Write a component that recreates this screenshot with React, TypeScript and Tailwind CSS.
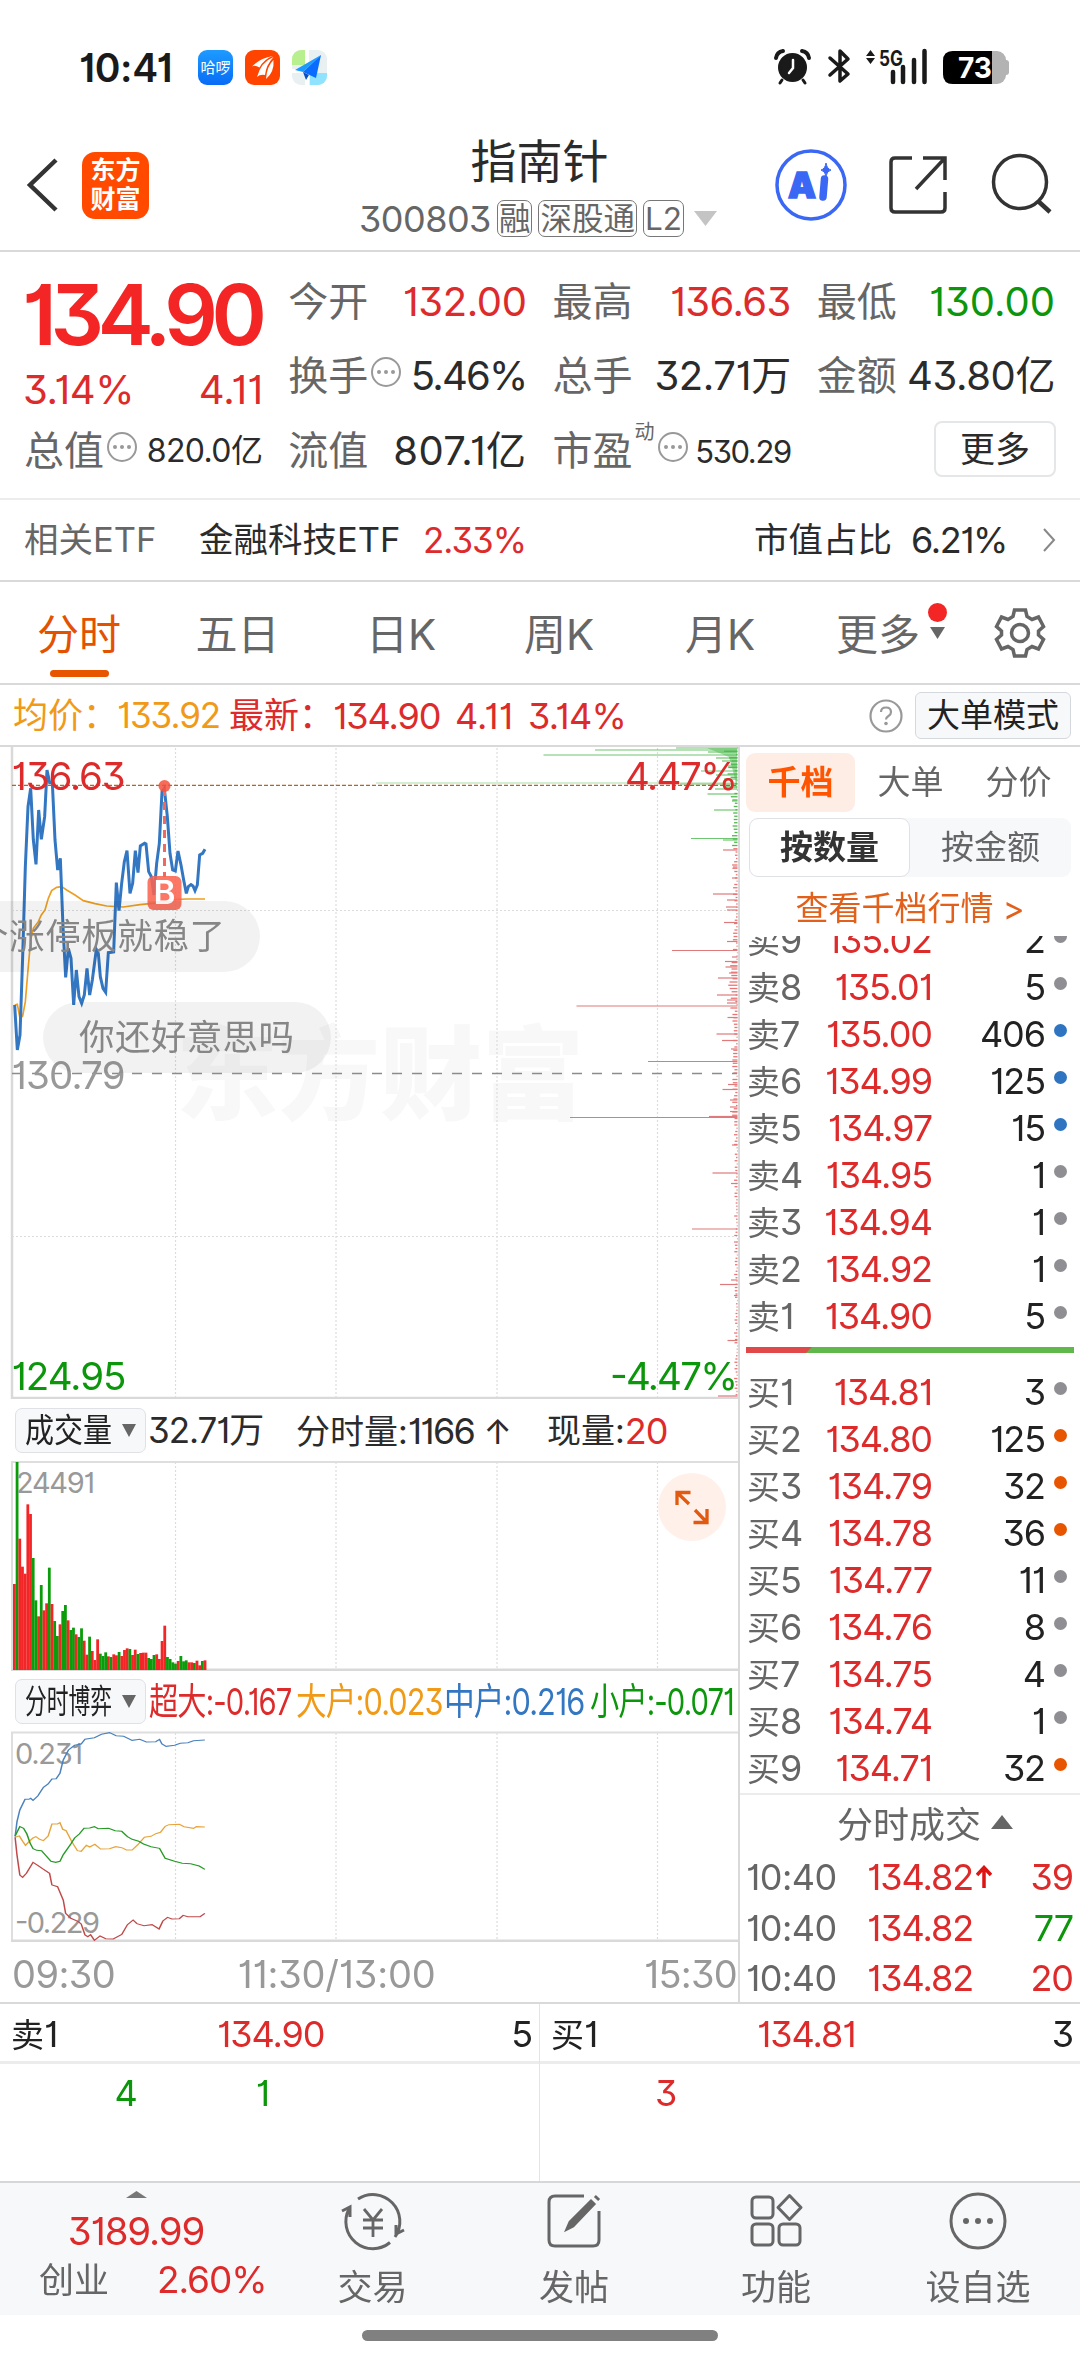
import { ReactNode } from "react";
import clsx from "clsx";
import { twMerge } from "tailwind-merge";

const RED = "text-[#dd2b2b]";
const GREEN = "text-[#0b960b]";
const GRAY = "text-[#666666]";
const DARK = "text-[#2b2b2b]";

const Num = ({ className, children }: { className?: string; children: ReactNode }) => (
  <span className={twMerge("whitespace-nowrap tracking-[-0.03em] [font-feature-settings:'cv09','cv01']", className)}>
    {children}
  </span>
);

const StatusBar = () => (
  <div className="flex h-[110px] items-center pt-[24px] pl-[79px]">
    <div className="w-[119px] text-[39px] font-semibold text-[#1a1a1a]">
      <Num className="tracking-[-0.01em]">10:41</Num>
    </div>
    <div className="flex gap-3">
      <div className="flex h-[35px] w-[35px] items-center justify-center rounded-[9px] bg-gradient-to-b from-[#1f9bff] to-[#0a6cf5] text-[15px] text-white">
        哈啰
      </div>
      <svg className="h-[35px] w-[35px]" viewBox="0 0 35 35">
        <rect width="35" height="35" rx="9" fill="#ff4400" />
        <g fill="#fff">
          <path d="M7 16.500Q15 8 28 6Q19 9 14.500 17.500Q10 14.500 7 16.500Z" />
          <path d="M12 27Q16 12 28.500 7Q21 15 20 25Q15 24 12 27Z" />
          <path d="M21 29Q22 16 28.500 10Q29.500 22 21 29Z" />
        </g>
      </svg>
      <svg className="h-[35px] w-[35px]" viewBox="0 0 35 35">
        <clipPath id="mapClip">
          <rect width="35" height="35" rx="9" />
        </clipPath>
        <g clipPath="url(#mapClip)">
          <rect width="35" height="35" fill="#e9f0f2" />
          <path d="M0 0H13V15H0Z" fill="#b9f08f" />
          <path d="M18 23H35V35H18Z" fill="#8fe3ff" />
          <path d="M15 0V35M0 21H15" stroke="#fff" strokeWidth="4" />
          <path d="M29 5L3 20L11 22Z" fill="#1b9bff" />
          <path d="M29 5L11 22L24 28Z" fill="#0a6cff" />
          <path d="M11 22L14 30L17 25Z" fill="#0a4fc0" />
        </g>
      </svg>
    </div>
    <svg className="ml-[446px] h-[40px] w-[240px]" viewBox="0 0 240 40">
      <g fill="none" stroke="#1a1a1a" strokeLinecap="round">
        <path d="M3 11Q4 5 10 4M29 4Q35 5 36 11" strokeWidth="4" />
        <circle cx="19.500" cy="20.500" r="13" fill="#1a1a1a" strokeWidth="3" />
        <path d="M9 33L7 36M30 33L32 36" strokeWidth="3" />
        <path d="M20 13V21L16 26" stroke="#fff" strokeWidth="2.500" />
        <path d="M57 11L75 27L67 34V4L75 12L57 28" strokeWidth="3.500" strokeLinejoin="round" />
        <path d="M120 25V35M130 20V35M141 13V35M151.500 4V35" strokeWidth="4.500" />
      </g>
      <path d="M93 9L97.500 3L102 9ZM93 11L97.500 17L102 11Z" fill="#1a1a1a" />
      <text x="106" y="19" fontSize="21" fontWeight="700" textLength="24" lengthAdjust="spacingAndGlyphs" fill="#1a1a1a">
        5G
      </text>
      <rect x="170" y="4" width="63" height="33" rx="9" fill="#b3b3b3" />
      <rect x="230" y="13" width="6" height="15" rx="3" fill="#b3b3b3" />
      <path d="M180 4H219V37H180Q170 37 170 27V14Q170 4 180 4Z" fill="#000" />
      <text x="185" y="31" fontSize="29" fontWeight="700" textLength="34" lengthAdjust="spacingAndGlyphs" fill="#fff">
        73
      </text>
    </svg>
  </div>
);

const Tag = ({ children }: { children: ReactNode }) => (
  <span className="flex h-[37px] items-center rounded-[7px] border border-[#777] px-[1px] text-[31.5px]">
    {children}
  </span>
);

const Header = () => (
  <div className="flex h-[142px] items-start border-b-2 border-[#d9d9d9]">
    <svg className="mt-[48px] ml-[26px] h-[54px] w-[34px]" viewBox="0 0 34 54">
      <path d="M30 2L4 27L30 52" fill="none" stroke="#333" strokeWidth="4.500" />
    </svg>
    <div className="mt-[42px] ml-[22px] flex h-[67px] w-[67px] flex-col items-center justify-center rounded-[13px] bg-[#ff4a00] pb-[2px] text-[25px] leading-[29px] font-bold text-white">
      <span>东方</span>
      <span>财富</span>
    </div>
    <div className="ml-[151px] flex w-[474px] flex-col items-center pt-[26px]">
      <span className="ml-[5px] text-[46px] leading-[50px] text-[#2b2b2b]">指南针</span>
      <div className={clsx("mt-[14px] ml-[2px] flex h-[37px] items-center gap-[6px] text-[36px]", GRAY)}>
        <Num className="tracking-[-0.015em]">300803</Num>
        <Tag>融</Tag>
        <Tag>深股通</Tag>
        <Tag>L2</Tag>
        <svg className="ml-[4px] h-[15px] w-[23px]" viewBox="0 0 23 15">
          <path d="M0 0H23L11.500 15Z" fill="#c4c4c4" />
        </svg>
      </div>
    </div>
    <svg className="mt-[38px] h-[74px] w-[74px]" viewBox="0 0 74 74">
      <circle cx="37" cy="37" r="34" fill="none" stroke="#3a68f5" strokeWidth="3.500" />
      <text x="14" y="50" fontSize="36" fontWeight="900" textLength="28" lengthAdjust="spacingAndGlyphs" fill="#3a68f5" stroke="#3a68f5" strokeWidth="1.500">
        A
      </text>
      <path d="M50.500 31L49 49" stroke="#3a68f5" strokeWidth="7.500" strokeLinecap="round" />
      <path d="M52 15Q53 21 57 22Q53 23 52 28Q51 23 47 22Q51 21 52 15Z" fill="#3a68f5" stroke="#3a68f5" />
    </svg>
    <svg className="mt-[44px] ml-[40px] h-[62px] w-[62px]" viewBox="0 0 62 62" fill="none" stroke="#333" strokeWidth="3.500">
      <path d="M24 4H7Q3 4 3 8V54Q3 58 7 58H53Q57 58 57 54V38" />
      <path d="M35 4H57V26M57 4L28 35" />
    </svg>
    <svg className="mt-[43px] ml-[41px] h-[62px] w-[62px]" viewBox="0 0 62 62" fill="none" stroke="#333" strokeWidth="3.500">
      <circle cx="29" cy="29" r="26.500" />
      <path d="M47 48L59 59" strokeWidth="4.500" />
    </svg>
  </div>
);

const InfoDots = () => (
  <svg className="h-[32px] w-[32px] shrink-0" viewBox="0 0 32 32">
    <circle cx="16" cy="16" r="14" fill="none" stroke="#999" strokeWidth="2" />
    <g fill="#999">
      <circle cx="9" cy="16" r="2" />
      <circle cx="16" cy="16" r="2" />
      <circle cx="23" cy="16" r="2" />
    </g>
  </svg>
);

interface StatProps {
  label: string;
  value: string;
  color?: string;
  dots?: boolean;
  sup?: string;
  valueClass?: string;
}

const Stat = ({ label, value, color = DARK, dots, sup, valueClass }: StatProps) => (
  <div className="flex h-[74px] items-center">
    <span className={clsx("ml-[-1px] text-[40px]", GRAY)}>{label}</span>
    {sup && <span className={clsx("mt-[-38px] ml-[2px] text-[20px]", GRAY)}>{sup}</span>}
    {dots && (
      <span className="mt-[-8px] ml-[2px]">
        <InfoDots />
      </span>
    )}
    <Num className={twMerge("ml-auto text-[40px] tracking-[-0.01em]", color, valueClass)}>{value}</Num>
  </div>
);

const Quote = () => (
  <div className="grid h-[248px] grid-cols-4 grid-rows-[74px_75px_74px] gap-x-[27px] border-b-2 border-[#ececec] px-[25px] pt-[13px]">
    <div className="row-span-2">
      <div className="flex h-[100px] items-center">
        <Num className="ml-[-3px] text-[84px] font-semibold tracking-[-0.075em] text-[#f32525]">134.90</Num>
      </div>
      <div className={clsx("flex h-[49px] items-center justify-between text-[40px]", RED)}>
        <Num className="ml-[-2px] tracking-[-0.01em]">3.14%</Num>
        <Num className="mr-[-1px] tracking-[0em]">4.11</Num>
      </div>
    </div>
    <Stat label="今开" value="132.00" color={RED} />
    <Stat label="最高" value="136.63" color={RED} valueClass="tracking-[-0.015em]" />
    <Stat label="最低" value="130.00" color={GREEN} valueClass="tracking-[0em]" />
    <Stat label="换手" value="5.46%" dots valueClass="tracking-[-0.045em]" />
    <Stat label="总手" value="32.71万" />
    <Stat label="金额" value="43.80亿" />
    <Stat label="总值" value="820.0亿" dots valueClass="text-[32px] tracking-[-0.02em]" />
    <Stat label="流值" value="807.1亿" valueClass="tracking-[0.01em]" />
    <Stat label="市盈" value="530.29" sup="动" dots valueClass="text-[31px] tracking-[-0.045em]" />
    <div className="flex items-center justify-end">
      <span className="mt-[-4px] mr-[-1px] flex h-[56px] w-[122px] items-center justify-center rounded-lg border-2 border-[#e4e6e8] text-[35px] text-[#2b2b2b]">
        更多
      </span>
    </div>
  </div>
);

const EtfRow = () => (
  <div className="flex h-[82px] items-center border-b-2 border-[#d9d9d9] px-[24px] text-[34.5px] text-[#2b2b2b]">
    <span className={clsx("w-[175px]", GRAY)}>相关ETF</span>
    <span className="w-[224px]">金融科技ETF</span>
    <Num className={twMerge("text-[35px]", RED)}>2.33%</Num>
    <span className="ml-auto">市值占比</span>
    <Num className="ml-[19px] text-[36px] tracking-[-0.04em]">6.21%</Num>
    <svg className="ml-[35px] h-[24px] w-[14px]" viewBox="0 0 14 24">
      <path d="M2 1L12 12L2 23" fill="none" stroke="#888" strokeWidth="2" />
    </svg>
  </div>
);

const Tabs = () => (
  <div className={clsx("flex h-[103px] items-center border-b-2 border-[#d9d9d9] text-[42px]", GRAY)}>
    <div className="flex h-full w-[158px] flex-col items-center justify-between pt-[26px] pb-[6px] text-[#e25200]">
      <span className="leading-[54px]">分时</span>
      <span className="h-[7px] w-[59px] rounded-full bg-[#e85500]" />
    </div>
    <span className="w-[159px] pt-[4px] text-center">五日</span>
    <span className="w-[168px] pt-[4px] text-center">日K</span>
    <span className="w-[148px] pt-[4px] text-center">周K</span>
    <span className="w-[174px] pt-[4px] text-center">月K</span>
    <span className="ml-[29px] pt-[4px]">更多</span>
    <div className="ml-[8px] flex flex-col items-center gap-[5px] pb-[23px]">
      <span className="h-[19px] w-[19px] rounded-full bg-[#f32525]" />
      <svg className="h-[12px] w-[15px]" viewBox="0 0 15 12">
        <path d="M0 0H15L7.500 12Z" fill="#666" />
      </svg>
    </div>
    <svg className="ml-[47px] h-[52px] w-[52px]" viewBox="-26 -26 52 52" fill="none" stroke="#666" strokeWidth="3.500">
      <path d="M-5.500 -23H5.500L7 -16.500L12 -13.500L18.500 -16L23.500 -6.500L18.500 -2V2L23.500 6.500L18.500 16L12 13.500L7 16.500L5.500 23H-5.500L-7 16.500L-12 13.500L-18.500 16L-23.500 6.500L-18.500 2V-2L-23.500 -6.500L-18.500 -16L-12 -13.500L-7 -16.500Z" />
      <circle r="8.500" />
    </svg>
  </div>
);

const PriceSummary = () => (
  <div className="flex h-[62px] items-center border-b-2 border-[#d9d9d9] pt-[1px] pr-[9px] pl-[13px] text-[35px]">
    <span className="flex w-[216px] items-center text-[#f09a18]">
      <span className="w-[104px] whitespace-nowrap">均价：</span>
      <Num>133.92</Num>
    </span>
    <span className={clsx("flex items-center", RED)}>
      <span className="w-[104px] whitespace-nowrap">最新：</span>
      <Num className="w-[122px] text-[36px]">134.90</Num>
      <Num className="w-[73px] text-[36px] tracking-[0em]">4.11</Num>
      <Num className="text-[36px] tracking-[-0.02em]">3.14%</Num>
    </span>
    <svg className="ml-auto h-[34px] w-[34px]" viewBox="0 0 34 34">
      <circle cx="17" cy="17" r="15.500" fill="none" stroke="#999" strokeWidth="2.200" />
      <path d="M12 13Q12 8.500 17 8.500T22 13Q22 15.500 19.500 17T17 20.500" fill="none" stroke="#999" strokeWidth="2.200" />
      <circle cx="17" cy="24.500" r="1.800" fill="#999" />
    </svg>
    <span className="ml-[12px] flex h-[47px] w-[156px] items-center justify-center rounded-md border border-[#d5d8dc] bg-[#f7f8fa] text-[33px] text-[#222]">
      大单模式
    </span>
  </div>
);

const GRID_X = [175.5, 336, 497, 657.5];

// [y, left edge] of the longer resting orders, right aligned on the axis
const SELL_DEPTH = [
  [748, 676], [750, 595], [752, 708], [755, 543.5], [758, 716], [761, 722], [766, 728], [771, 701], [775, 716],
  [779, 724], [784, 680], [789, 715], [794, 707.5], [801, 732], [810, 714], [838.5, 691], [840, 723],
];
const BUY_DEPTH = [
  [850, 723], [867, 733], [878, 732], [894, 713], [900, 727], [907, 726], [910, 727], [922.5, 724], [941.5, 727],
  [950.5, 672], [957, 732], [961.5, 725], [967, 725.5], [973, 729], [978, 718], [995, 717], [1000, 727], [1003, 727],
  [1006, 576.5], [1017.5, 727.5], [1034, 716.5], [1040.5, 722], [1049, 731], [1061.5, 648], [1084.5, 728],
  [1089.5, 722.5], [1100, 730], [1107, 730], [1111.5, 730], [1117.5, 570], [1116.5, 709], [1145, 732], [1173, 712.5],
  [1183.5, 731], [1229, 692], [1242, 734], [1280, 731], [1284.5, 720], [1295.5, 734], [1340.5, 727.5], [1396, 718],
];
const NOISE = Array.from({ length: 200 }, (_, i) => {
  const y = 748 + i * 3.25;
  const r = Math.abs(Math.sin(i * 12.9898) * 43758.5453) % 1;
  const spread = y < 800 ? 14 : y < 1010 && y > 960 ? 9 : y < 1130 ? 5 : 3;
  return [y, 737 - r * spread];
});

const PRICE =
  "44,795 52,930 60,885 68,650 76,380 84,200 92,145 100,300 108,373 116,210 124,298 134,230 141,90 149,128 157,128 165,300 173,390 181,355 189,560 197,712 205,625 213,655 221,795 229,690 237,770 245,790 253,765 261,685 269,765 277,720 289,628 295,640 301,710 309,745 317,757 325,638 341,636 349,428 357,512 365,430 373,365 381,332 390,460 398,430 406,332 414,398 421,318 434,310 438,312 446,395 454,410 462,465 470,370 478,310 486,155 493,145 502,230 510,340 518,390 526,393 534,333 543,375 551,420 559,460 565,440 573,434 579,438 585,452 592,435 599,345 608,340 615,328";
const AVERAGE =
  "44,795 52,793 60,835 68,828 76,785 84,690 92,600 100,565 115,545 124,525 135,510 145,475 155,452 170,442 185,440 200,450 225,465 250,482 285,491 320,498 370,501 420,494 450,491 480,488 520,479 560,477 615,477";

const digits = "[font-feature-settings:'cv09','cv01']";

const PriceChart = () => (
  <svg className="block h-[652px] w-[738px]" viewBox="0 747 738 652">
    <g fill="#f8f8f8" fontSize="102" fontWeight="900">
      <text x="176" y="1112" textLength="408">东方财富</text>
    </g>
    <g stroke="#dcdcdc" strokeWidth="1.200" strokeDasharray="2 2">
      {GRID_X.map((x) => (
        <path key={x} d={`M${x} 748V1398`} />
      ))}
      <path d="M12 910.500H737M12 1236.500H737" />
    </g>
    <path d="M12 746V1398H738" fill="none" stroke="#d9d9d9" strokeWidth="2.500" />
    <g stroke="#4db84d" strokeWidth="1.200" opacity="0.8">
      <path d="M376 783H737" opacity="0.6" />
      {SELL_DEPTH.map(([y, x]) => (
        <path key={y} d={`M${x} ${y}H737.500`} />
      ))}
    </g>
    <path d="M707 748L737 748V790L734 775L729 757Z" fill="#58bd58" opacity="0.55" />
    <g stroke="#e07a7a" strokeWidth="1.200">
      {BUY_DEPTH.map(([y, x]) => (
        <path key={y} d={`M${x} ${y}H737.500`} />
      ))}
    </g>
    {NOISE.map(([y, x]) => (
      <path key={y} d={`M${x} ${y}H737.500`} stroke={y < 847 ? "#4db84d" : "#ea7474"} strokeWidth="1.300" />
    ))}
    <path d="M12 785.300H737" stroke="#b5651d" strokeWidth="1.300" strokeDasharray="4 2" />
    <path d="M12 1073.500H737" stroke="#8c8c8c" strokeWidth="1.500" strokeDasharray="10 10" />
    <g transform="translate(0 740) scale(0.33333)" fill="none" strokeLinejoin="miter">
      <polyline points={AVERAGE} stroke="#ee9f22" strokeWidth="5" />
      <polyline points={PRICE} stroke="#3377c2" strokeWidth="9" />
    </g>
    <g className={digits} fontSize="38.500">
      <text x="11.500" y="789.500" textLength="114" fill="#dd2b2b">136.63</text>
      <text x="625" y="789.500" textLength="113" fill="#dd2b2b">4.47%</text>
      <text x="11.500" y="1088.500" textLength="114" fill="#999">130.79</text>
      <text x="11.500" y="1389.500" textLength="115" fill="#0b960b">124.95</text>
      <text x="610" y="1389.500" textLength="128" fill="#0b960b">-4.47%</text>
    </g>
    <path d="M164.500 788V877" stroke="#ee6a60" strokeWidth="3" strokeDasharray="8 6" />
    <circle cx="164.500" cy="786" r="6" fill="#f4513c" opacity="0.85" />
    <rect x="147.500" y="876" width="34" height="34" rx="6" fill="#fa6450" opacity="0.87" />
    <text x="153.500" y="904" fontSize="32" fontWeight="600" textLength="22" lengthAdjust="spacingAndGlyphs" fill="#fff">B</text>
    <g fill="#000" fillOpacity="0.05">
      <rect x="-60" y="901" width="320" height="71" rx="35.500" />
      <rect x="43" y="1002" width="288" height="71" rx="35.500" />
    </g>
    <g fontSize="35.500" fill="#868686">
      <text x="-27" y="949" textLength="252">个涨停板就稳了</text>
      <text x="79" y="1050" textLength="215">你还好意思吗</text>
    </g>
  </svg>
);

const Picker = ({ children }: { children: ReactNode }) => (
  <span className="flex h-[45px] w-[131px] shrink-0 items-center justify-between rounded-[7px] border border-[#dfe1e6] bg-[#f7f8fa] pr-[9px] pl-[9px] text-[33px] text-[#222]">
    <span className="w-[88px]">{children}</span>
    <svg className="h-[13px] w-[14px]" viewBox="0 0 14 13">
      <path d="M0 0H14L7 13Z" fill="#666" />
    </svg>
  </span>
);

const VolumeHeader = () => (
  <div className={clsx("flex h-[62px] items-center pt-[1px] pl-[15px] text-[34px]", DARK)}>
    <Picker>
      <span className="inline-block origin-left scale-x-[0.88] whitespace-nowrap">成交量</span>
    </Picker>
    <Num className="ml-[2px] w-[148px] text-[35px]">32.71万</Num>
    <span className="w-[251px] whitespace-nowrap">
      分时量:<Num className="text-[36px] tracking-[-0.05em]">1166</Num> ↑
    </span>
    <span>现量:</span>
    <Num className="text-[36px] text-[#dd2b2b]">20</Num>
  </div>
);

// bar tops in thirds of a pixel, "r" up and "g" down
const VOLUMES =
  "r432 g66 r296 r380 r401 r193 r222 g354 g481 r529 g435 r511 r490 g383 r492 g543 g588 r553 g513 g495 r541 g570 g563 r583 g591 g565 r602 r644 g590 r633 r660 r598 g641 g648 g637 r649 g651 r643 r646 g636 r648 r630 r625 g627 r645 r629 g642 r639 r638 r638 g654 g657 g645 r643 r657 r603 r557 g651 g657 g667 g671 r663 g648 g664 g661 r667 r667 g669 r662 r676 g663 r661".split(" ");

const VolumeChart = () => (
  <svg className="block h-[210px] w-[738px]" viewBox="0 1461 738 210">
    <g stroke="#dcdcdc" strokeWidth="1.200" strokeDasharray="2 2">
      {GRID_X.map((x) => (
        <path key={x} d={`M${x} 1462V1669`} />
      ))}
    </g>
    <path d="M738 1462H12V1670" fill="none" stroke="#dedede" strokeWidth="2" />
    <path d="M11 1669.700H738" stroke="#d9d9d9" strokeWidth="2.500" />
    {VOLUMES.map((v, i) => {
      const top = 1440 + Number(v.slice(1)) / 3;
      return (
        <rect key={i} x={13 + i * 2.685} y={top} width="2.800" height={1670 - top} fill={v[0] === "r" ? "#f22626" : "#0a9c0a"} />
      );
    })}
    <text x="16" y="1493" fontSize="29" textLength="79" fill="#999" className={digits}>24491</text>
    <circle cx="692" cy="1507" r="34" fill="#fff1ea" />
    <g fill="none" stroke="#e25a10" strokeWidth="3.300">
      <path d="M677 1505V1492.500H690.500M677 1492.500L689 1504" />
      <path d="M707 1509V1522.500H693.500M707 1522.500L695 1510" />
    </g>
  </svg>
);

const FLOWS = [
  { label: "超大:-0.167", color: "text-[#dd2b2b]", width: "w-[147px]" },
  { label: "大户:0.023", color: "text-[#f09a18]", width: "w-[148px]" },
  { label: "中户:0.216", color: "text-[#3377c2]", width: "w-[146px]" },
  { label: "小户:-0.071", color: "text-[#0b960b]", width: "w-[144px]" },
];

const FlowHeader = () => (
  <div className="flex h-[60px] items-center pl-[15px] text-[37px]">
    <Picker>
      <span className="inline-block origin-left scale-x-[0.66] whitespace-nowrap">分时博弈</span>
    </Picker>
    <div className="ml-[3px] flex">
      {FLOWS.map((f) => (
        <span key={f.label} className={clsx("shrink-0", f.width, f.color)}>
          <Num className={clsx("inline-block origin-left", f.label.includes("-") ? "scale-x-[0.79]" : "scale-x-[0.83]")}>{f.label}</Num>
        </span>
      ))}
    </div>
  </div>
);

const FlowChart = () => (
  <svg className="block h-[211px] w-[738px]" viewBox="0 1731 738 211">
    <g stroke="#dcdcdc" strokeWidth="1.200" strokeDasharray="2 2">
      {GRID_X.map((x) => (
        <path key={x} d={`M${x} 1733V1940`} />
      ))}
    </g>
    <path d="M738 1732.500H12V1941" fill="none" stroke="#dedede" strokeWidth="2" />
    <path d="M11 1940.700H738" stroke="#d9d9d9" strokeWidth="2.500" />
    <g fontSize="29" fill="#999" className={digits}>
      <text x="15" y="1764" textLength="68">0.231</text>
      <text x="15" y="1933" textLength="85">-0.229</text>
    </g>
    <g transform="translate(0 1700) scale(0.472 0.33333)" fill="none" strokeWidth="3.200">
      <polyline stroke="#4a82bd" points="32,410 36,365 42,330 53,298 61,298 65,295 70,301 80,288 92,262 102,252 110,237 119,236 127,220 134,180 145,150 158,136 172,132 180,118 200,113 215,103 232,98 246,107 262,109 280,121 296,118 310,126 330,125 338,118 343,132 352,139 370,136 382,130 398,128 410,122 434,120" />
      <polyline stroke="#e8a43a" points="32,412 41,408 48,424 54,436 62,424 70,414 76,410 84,418 92,422 102,408 110,372 122,372 127,368 133,388 140,392 152,425 164,452 172,454 183,436 190,441 201,433 213,447 232,446 245,440 258,443 268,450 280,450 292,434 306,412 320,409 330,401 340,397 350,379 358,374 380,373 390,380 410,385 416,380 434,381" />
      <polyline stroke="#259a25" points="32,408 42,380 50,385 57,402 64,430 70,446 78,451 88,452 98,468 108,484 118,487 127,484 134,464 150,432 158,414 168,402 178,385 190,384 200,380 208,386 230,385 244,392 258,394 270,410 280,418 294,424 304,432 320,440 338,445 350,475 370,484 386,490 404,491 422,498 434,508" />
      <polyline stroke="#c04848" points="32,412 36,465 42,525 48,532 56,520 70,487 80,496 90,506 105,520 110,555 122,560 128,580 134,600 139,640 150,655 165,664 172,672 180,705 186,710 192,704 200,721 212,708 224,716 240,717 258,703 270,674 282,660 290,671 305,677 322,674 337,687 345,663 355,652 364,657 380,656 388,646 398,650 424,650 434,640" />
    </g>
  </svg>
);

const LEVELS_SELL = [
  ["卖9", "135.02", "2", "bg-[#8e8e93]"],
  ["卖8", "135.01", "5", "bg-[#8e8e93]"],
  ["卖7", "135.00", "406", "bg-[#2f74c0]"],
  ["卖6", "134.99", "125", "bg-[#2f74c0]"],
  ["卖5", "134.97", "15", "bg-[#2f74c0]"],
  ["卖4", "134.95", "1", "bg-[#8e8e93]"],
  ["卖3", "134.94", "1", "bg-[#8e8e93]"],
  ["卖2", "134.92", "1", "bg-[#8e8e93]"],
  ["卖1", "134.90", "5", "bg-[#8e8e93]"],
];
const LEVELS_BUY = [
  ["买1", "134.81", "3", "bg-[#8e8e93]"],
  ["买2", "134.80", "125", "bg-[#e85500]"],
  ["买3", "134.79", "32", "bg-[#e85500]"],
  ["买4", "134.78", "36", "bg-[#e85500]"],
  ["买5", "134.77", "11", "bg-[#8e8e93]"],
  ["买6", "134.76", "8", "bg-[#8e8e93]"],
  ["买7", "134.75", "4", "bg-[#8e8e93]"],
  ["买8", "134.74", "1", "bg-[#8e8e93]"],
  ["买9", "134.71", "32", "bg-[#e85500]"],
];

const Level = ({ row: [name, price, qty, dot] }: { row: string[] }) => (
  <div className="flex h-[47px] shrink-0 items-center pr-[13px] pl-[7px] text-[36px]">
    <span className={clsx("w-[60px] text-[33px]", GRAY)}>
      {name[0]}
      <Num className="text-[36px]">{name[1]}</Num>
    </span>
    <Num className={clsx("w-[125px] text-right", RED)}>{price}</Num>
    <Num className="flex-1 text-right text-[#222]">{qty}</Num>
    <span className={clsx("mt-[-6px] ml-[9px] h-[13px] w-[13px] rounded-full", dot)} />
  </div>
);

const TRADES = [
  { price: "134.82", up: true, qty: "39", color: RED },
  { price: "134.82", qty: "77", color: GREEN },
  { price: "134.82", qty: "20", color: RED },
];

const OrderBook = () => (
  <div className="flex w-[342px] flex-col overflow-hidden border-l-2 border-[#d9d9d9] [&>*]:shrink-0">
    <div className={clsx("mt-[6px] ml-[6px] flex h-[59px] items-center text-[33px]", GRAY)}>
      <span className="flex h-full w-[109px] items-center justify-center rounded-[9px] bg-[#feede5] font-bold text-[#ff5500]">千档</span>
      <span className="w-[109px] pl-[2px] text-center">大单</span>
      <span className="w-[109px] text-center">分价</span>
    </div>
    <div className={clsx("mt-[6px] ml-[9px] flex h-[59px] w-[322px] items-center rounded-[9px] bg-[#f7f8fa] text-[33px]", GRAY)}>
      <span className="flex h-full w-[161px] items-center justify-center rounded-[9px] border border-[#dfe1e6] bg-white font-bold text-[#333]">按数量</span>
      <span className="w-[161px] text-center">按金额</span>
    </div>
    <div className="flex h-[59px] items-center justify-center pt-[3px] text-[33px] text-[#e2601a]">查看千档行情 &gt;</div>
    {/* scrolled list: the first ask is cut by the header */}
    <div className="flex h-[405px] flex-col justify-end overflow-hidden pb-[2px]">
      {LEVELS_SELL.map((row) => (
        <Level key={row[0]} row={row} />
      ))}
    </div>
    <svg className="mt-[6px] ml-[6px] h-[6px] w-[328px]" viewBox="0 0 328 6">
      <path d="M0 0H328V6H0Z" fill="#60b84c" />
      <path d="M0 0H66L60 6H0Z" fill="#e0484a" />
    </svg>
    <div className="mt-[15px] border-b-2 border-[#ececec] pb-[2px]">
      {LEVELS_BUY.map((row) => (
        <Level key={row[0]} row={row} />
      ))}
    </div>
    <div className={clsx("flex h-[57px] items-center justify-center gap-[10px] pt-[3px] pl-[30px] text-[36px]", GRAY)}>
      分时成交
      <svg className="mb-[6px] h-[14px] w-[22px]" viewBox="0 0 22 14">
        <path d="M0 14H22L11 0Z" fill="#666" />
      </svg>
    </div>
    {TRADES.map((t, i) => (
      <div key={i} className="flex h-[50.5px] items-center pr-[7px] pl-[6px] text-[36px]">
        <Num className={clsx("w-[121px] tracking-[-0.015em]", GRAY)}>10:40</Num>
        <Num className={RED}>{t.price}</Num>
        {t.up && (
          <svg className="ml-[3px] h-[24px] w-[16px]" viewBox="0 0 16 24">
            <path d="M8 23V3M1 10L8 2.500L15 10" fill="none" stroke="#dc1414" strokeWidth="3.500" />
          </svg>
        )}
        <Num className={clsx("ml-auto", t.color)}>{t.qty}</Num>
      </div>
    ))}
  </div>
);

const QueueSide = ({ name, price, qty, orders, color }: { name: string; price: string; qty: string; orders: string[]; color: string }) => (
  <div className="flex w-[540px] flex-col border-r border-[#e4e4e4] last:border-r-0">
    <div className="flex h-[60px] items-center border-b-[3px] border-[#ececec] pt-[2px] pr-[7px] pl-[11px] text-[36px] text-[#222]">
      <span className="w-[206px] text-[33px]">{name[0]}<Num className="text-[36px]">{name[1]}</Num></span>
      <Num className={RED}>{price}</Num>
      <Num className="ml-auto">{qty}</Num>
    </div>
    <div className={clsx("flex px-[57px] pt-[11px] text-[36px]", color)}>
      {orders.map((o) => (
        <Num key={o} className="w-[137px] text-center">{o}</Num>
      ))}
    </div>
  </div>
);

const NavItem = ({ label, width, children }: { label: string; width: string; children: ReactNode }) => (
  <div className={clsx("flex flex-col items-center pt-[6px]", width)}>
    <svg className="h-[64px] w-[68px]" viewBox="-34 -32 68 64" fill="none" stroke="#666" strokeWidth="3">
      {children}
    </svg>
    <span className="mt-[11px] text-[35px] leading-[46px]">{label}</span>
  </div>
);

const BottomNav = () => (
  <div className={clsx("flex h-[134px] border-t-2 border-[#d5d7d9] bg-[#f7f8fa]", GRAY)}>
    <div className="flex w-[272px] flex-col items-center pt-[8px]">
      <svg className="h-[7px] w-[21px]" viewBox="0 0 21 7">
        <path d="M0 7H21L10.500 0Z" fill="#777" />
      </svg>
      <Num className={clsx("mt-[8px] text-[38.5px] leading-[50px]", RED)}>3189.99</Num>
      <div className="flex w-full items-center pl-[39px] text-[35px] leading-[48px]">
        <span className="w-[118px]">创业</span>
        <Num className={clsx("text-[37px]", RED)}>2.60%</Num>
      </div>
    </div>
    <NavItem label="交易" width="w-[201px]">
      <path d="M-15 -22A27 27 0 0 1 22 16M17 21.500A27 27 0 0 1 -24 -12M-31 -10L-23 -14V-4M31 9L23 13V4" />
      <path d="M-9 -12L0 -1L9 -12M0 -1V16M-10 -1H10M-10 7H10" strokeWidth="2.800" />
    </NavItem>
    <NavItem label="发帖" width="w-[202px]">
      <path d="M10 -25H-19Q-25 -25 -25 -19V19Q-25 25 -19 25H19Q25 25 25 19V-10" />
      <path d="M-7 8L-4 1L17 -20L20 -17L-1 5Z" fill="#666" />
      <path d="M22 -22L24 -24" strokeWidth="6" />
    </NavItem>
    <NavItem label="功能" width="w-[202px]">
      <rect x="-24" y="-24" width="21" height="21" rx="4" />
      <rect x="-24" y="3" width="21" height="21" rx="4" />
      <rect x="3" y="3" width="21" height="21" rx="4" />
      <path d="M13.500 -25.500L25 -13.500L13.500 -1.500L2 -13.500Z" strokeLinejoin="round" />
    </NavItem>
    <NavItem label="设自选" width="w-[202px]">
      <circle r="27" />
      <g fill="#666" stroke="none">
        <circle cx="-12" r="3" />
        <circle r="3" />
        <circle cx="12" r="3" />
      </g>
    </NavItem>
  </div>
);

export default function App() {
  return (
    <div className="flex h-[2362px] w-[1080px] flex-col overflow-hidden bg-white font-['Inter','Noto_Sans_CJK_SC',sans-serif] leading-none">
      <StatusBar />
      <Header />
      <Quote />
      <EtfRow />
      <Tabs />
      <PriceSummary />
      <div className="flex h-[1255px] shrink-0">
        <div className="w-[738px]">
          <PriceChart />
          <VolumeHeader />
          <VolumeChart />
          <FlowHeader />
          <FlowChart />
          <div className="flex h-[60px] items-center justify-between pt-[3px] pr-[1px] pl-[12px] text-[38px] text-[#999]">
            <Num className="w-[200px] tracking-[-0.015em]">09:30</Num>
            <Num className="flex-1 text-center tracking-[-0.005em]">11:30/13:00</Num>
            <Num className="w-[276px] text-right tracking-[-0.02em]">15:30</Num>
          </div>
        </div>
        <OrderBook />
      </div>
      <div className="flex h-[179px] shrink-0 border-t-2 border-[#d9d9d9]">
        <QueueSide name="卖1" price="134.90" qty="5" orders={["4", "1"]} color={GREEN} />
        <QueueSide name="买1" price="134.81" qty="3" orders={["3"]} color={RED} />
      </div>
      <BottomNav />
      <div className="mx-auto mt-[15px] h-[11px] w-[356px] rounded-full bg-[#808080]" />
    </div>
  );
}
